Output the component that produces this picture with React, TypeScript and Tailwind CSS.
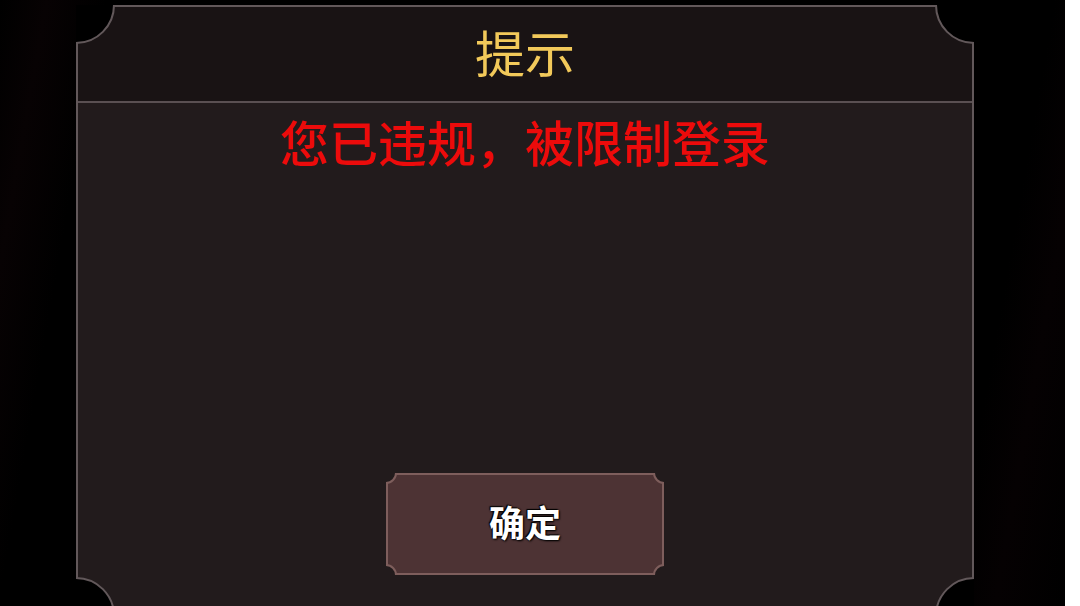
import React from "react";

const FRAME = "#62585a";
const BODY_BG = "#221b1c";

function FrameCorner({ pos }: { pos: string }) {
  return (
    <div
      className={`absolute w-[78px] h-[78px] rounded-full bg-black border-2 border-[#62585a] ${pos}`}
    />
  );
}

function ButtonNotch({ pos }: { pos: string }) {
  return (
    <div
      className={`absolute w-[22px] h-[22px] rounded-full bg-[#221b1c] border-2 border-[#7e5e5c] ${pos}`}
    />
  );
}

export default function App() {
  return (
    <div
      className="w-[1080px] h-[606px] flex overflow-hidden bg-white"
      style={{ fontFamily: '"Noto Sans CJK SC", "Noto Sans", sans-serif' }}
    >
      {/* dark stage behind the dialog */}
      <div className="relative w-[1065px] h-full overflow-hidden bg-[linear-gradient(100deg,#000_0%,#070203_4%,#000_9%,#000_90%,#050102_94%,#000_100%)] pt-[5px] pl-[76px]">
        {/* dialog frame, clipped so the scalloped corners cut into it */}
        <div className="relative w-[898px] h-[611px] overflow-hidden">
          <div
            className="w-full h-full border-2 flex flex-col"
            style={{ borderColor: FRAME, backgroundColor: BODY_BG }}
          >
            {/* header */}
            <div className="h-[96px] bg-[#191314] border-b-2 border-[#5a5052] flex items-center justify-center pb-[6px]">
              <span className="text-[50px] leading-[60px] text-[#f2c95a]">提示</span>
            </div>

            {/* message */}
            <div className="flex flex-col items-center pt-[8px]">
              <span className="text-[49px] leading-[60px] font-medium text-[#ec0b0b]">
                您已违规，被限制登录
              </span>

              <div className="relative mt-[302px] w-[278px] h-[102px] overflow-hidden">
                <button className="w-full h-full bg-[#4d3334] border-2 border-[#7e5e5c] flex items-center justify-center pb-[6px]">
                  <span className="text-[36px] leading-[44px] font-bold text-white [text-shadow:0_0_2px_#000,1px_1px_2px_#000,-1px_-1px_1px_#000]">
                    确定
                  </span>
                </button>
                <ButtonNotch pos="-left-[11px] -top-[11px]" />
                <ButtonNotch pos="-right-[11px] -top-[11px]" />
                <ButtonNotch pos="-left-[11px] -bottom-[11px]" />
                <ButtonNotch pos="-right-[11px] -bottom-[11px]" />
              </div>
            </div>
          </div>

          {/* concave frame corners */}
          <FrameCorner pos="-left-[39px] -top-[39px]" />
          <FrameCorner pos="-right-[39px] -top-[39px]" />
          <FrameCorner pos="-left-[39px] -bottom-[39px]" />
          <FrameCorner pos="-right-[39px] -bottom-[39px]" />
        </div>
      </div>
      <div className="flex-1 h-full bg-white" />
    </div>
  );
}
